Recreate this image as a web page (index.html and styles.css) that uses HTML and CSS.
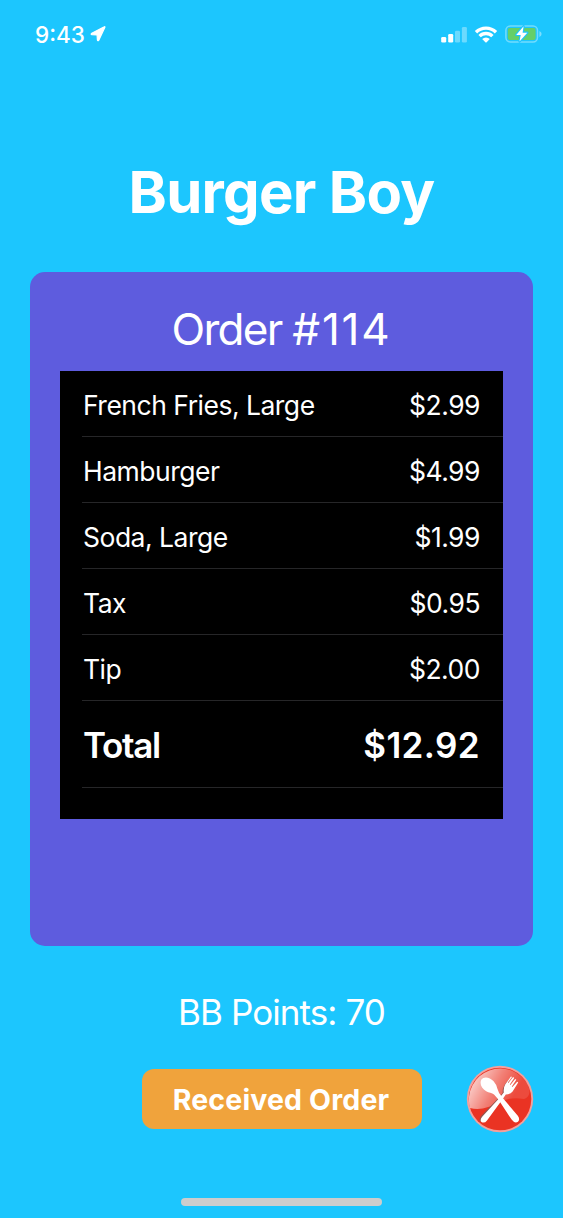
FILE: index.html
```
<!DOCTYPE html>
<html lang="en">
<head>
    <meta charset="UTF-8">
    <meta name="viewport" content="width=device-width, initial-scale=1.0">
    <title>Burger Boy</title>
    <link rel="stylesheet" href="styles.css">
</head>
<body>
    <div class="screen">
        <header class="status-bar">
            <div class="status-left">
                <span class="clock">9:43</span>
                <svg class="location" width="16" height="16" viewBox="0 0 16 16">
                    <path d="M14.8 1.4 L8.9 14 Q7.7 15.4 7.4 13.8 L7.1 9 L2 8.7 Q0.4 8.4 1.8 7.3 L13.8 1.1 Q15.4 0.2 14.8 1.4 Z" fill="#fff" stroke="#fff" stroke-width="1.2" stroke-linejoin="round"/>
                </svg>
            </div>
            <div class="status-right">
                <svg class="signal" width="26" height="17" viewBox="0 0 26 17" fill="#fff">
                    <rect x="0.2" y="11" width="5" height="5.6" rx="1.3"/>
                    <rect x="7.2" y="8" width="5" height="8.6" rx="1.3"/>
                    <rect x="14" y="4.7" width="5" height="11.9" rx="1.3" opacity="0.35"/>
                    <rect x="20.9" y="1" width="5" height="15.6" rx="1.3" opacity="0.35"/>
                </svg>
                <svg class="wifi" width="24" height="17" viewBox="0 0 24 17" fill="none" stroke="#fff">
                    <path d="M2 6.2 A14.2 14.2 0 0 1 22 6.2" stroke-width="3.4"/>
                    <path d="M5.6 10.2 A8.9 8.9 0 0 1 18.4 10.2" stroke-width="3.3"/>
                    <path d="M8.2 13 A5.5 5.5 0 0 1 15.8 13 L12.4 16.4 Q12 16.7 11.6 16.4 Z" fill="#fff" stroke="none"/>
                </svg>
                <svg class="battery" width="38" height="18" viewBox="0 0 38 18">
                    <rect x="0.9" y="0.9" width="31.6" height="16" rx="4.4" fill="none" stroke="#fff" stroke-opacity="0.38" stroke-width="1.5"/>
                    <path d="M34.4 6 Q36.6 6.8 36.6 9 Q36.6 11.2 34.4 12 Z" fill="#fff" opacity="0.42"/>
                    <rect x="2.8" y="2.9" width="27.8" height="12.1" rx="2" fill="#65cf68"/>
                    <path d="M18.6 1.2 L11.2 9.9 H15.7 L14.5 16.6 L22.3 7.7 H17.6 Z" fill="#fff" stroke="#1cc4fe" stroke-width="2.2" paint-order="stroke" stroke-linejoin="round"/>
                </svg>
            </div>
        </header>

        <h1 class="title">Burger Boy</h1>

        <section class="order-card">
            <h2 class="order-number">Order <span class="number">#114</span></h2>
            <div class="receipt">
                <div class="item"><span class="name">French Fries, Large</span><span class="price">$2.99</span></div>
                <div class="item"><span class="name">Hamburger</span><span class="price">$4.99</span></div>
                <div class="item"><span class="name">Soda, Large</span><span class="price">$1.99</span></div>
                <div class="item"><span class="name">Tax</span><span class="price">$0.95</span></div>
                <div class="item"><span class="name">Tip</span><span class="price">$2.00</span></div>
                <div class="item total"><span class="name">Total</span><span class="price">$12.92</span></div>
            </div>
        </section>

        <p class="points">BB Points: 70</p>

        <div class="actions">
            <button class="received">Received Order</button>
            <svg class="menu-icon" width="68" height="68" viewBox="0 0 68 68">
                <defs>
                    <linearGradient id="gloss" gradientUnits="userSpaceOnUse" x1="10" y1="14" x2="46" y2="34">
                        <stop offset="0" stop-color="#fff" stop-opacity="0.72"/>
                        <stop offset="0.5" stop-color="#fff" stop-opacity="0.38"/>
                        <stop offset="1" stop-color="#fff" stop-opacity="0.12"/>
                    </linearGradient>
                </defs>
                <circle cx="34" cy="34" r="33.2" fill="#f3a09d"/>
                <circle cx="34" cy="34" r="31.3" fill="#ea3323"/>
                <path d="M4 43 A31.3 31.3 0 0 1 62.5 21.4 C64.5 26.5 63.5 32 58 34 C48 32 39 34 32 37.5 C24 42.5 14 45.5 4 43 Z" fill="url(#gloss)"/>
                <!-- fork -->
                <path d="M44 13 L38.5 20 Q36.5 23 36.6 28 L32.5 33 L14.6 51.5 Q12.6 55 14.8 56.6 Q17.6 57.6 20 54.5 L36 34 Z" fill="#8f5550"/>
                <path d="M45 11.4 L39.2 19.4 Q37.2 22.6 37.8 27.6 L33.4 33 L16.2 51.8 Q13.6 55.2 15.4 57 Q18.4 58.8 21 55.4 L36 35 L39.8 29.4 Q44.4 29.4 46.6 26.4 L52.2 17.6 L51.2 16.8 L46.4 22.1 L45.8 21.6 L50.3 14.8 L49.2 13.9 L44.4 20.1 L43.8 19.6 L48.2 12.9 L47.1 12 L42.4 18.1 L41.8 17.6 L46 12 Z" fill="#fff"/>
                <!-- spoon -->
                <path d="M32.4 34.6 L45.6 54.6 Q48.8 59 52 56.8 Q54.4 54.6 51.8 50.8 L36.6 32.8 Q32.4 28.4 31.4 23.8 Q30.8 19.8 27.6 16.2 C23.6 11.8 17.6 11.2 15.4 14.6 C13.2 18.4 15.6 23.6 20.2 26.2 C22.9 27.7 26 27.6 28 29.4 Z" fill="#fff"/>
            </svg>
        </div>

        <div class="home-indicator"></div>
    </div>
</body>
</html>
```
FILE: styles.css
```
* {
    box-sizing: border-box;
}

body {
    margin: 0;
    background: #1cc6fe;
    font-family: Inter, "Liberation Sans", sans-serif;
    color: #fff;
}

.screen {
    display: flex;
    flex-direction: column;
    align-items: center;
    width: 563px;
    height: 1218px;
    padding: 0 30px 12px;
    overflow: hidden;
}

/* Status bar */
.status-bar {
    display: flex;
    justify-content: space-between;
    align-items: center;
    align-self: stretch;
    height: 68px;
    margin-right: -10px;
    padding-left: 5px;
}

.status-left,
.status-right {
    display: flex;
    align-items: center;
}

.status-left {
    gap: 5px;
}

.status-right {
    gap: 7px;
}

.clock {
    padding-top: 1px;
    font-size: 22.5px;
    font-weight: 500;
    line-height: 32px;
}

.title {
    margin: 84px 0 0;
    font-size: 58px;
    font-weight: 700;
    line-height: 80px;
    letter-spacing: -0.7px;
    white-space: nowrap;
}

/* Order card */
.order-card {
    align-self: stretch;
    height: 674px;
    margin-top: 40px;
    padding: 30px;
    background: #5e5cde;
    border-radius: 15px;
}

.order-number {
    margin: 0;
    font-size: 44px;
    font-weight: 400;
    line-height: 54px;
    letter-spacing: -1.7px;
    text-align: center;
}

.number {
    letter-spacing: 1.8px;
}

.receipt {
    height: 448px;
    margin-top: 15px;
    padding-left: 22px;
    background: #000;
}

.item {
    display: flex;
    justify-content: space-between;
    align-items: center;
    height: 66px;
    padding: 2px 23px 0 1px;
    border-bottom: 1px solid #262628;
    font-size: 26.5px;
    letter-spacing: -0.5px;
}

.total {
    height: 87px;
    font-size: 35px;
    font-weight: 600;
}

.total .name {
    letter-spacing: -1.3px;
}

.total .price {
    letter-spacing: 0.4px;
}

.points {
    margin: 43px 0 0;
    font-size: 35px;
    font-weight: 400;
    line-height: 46px;
    letter-spacing: -0.9px;
}

.actions {
    display: flex;
    justify-content: flex-end;
    align-items: center;
    gap: 44px;
    align-self: stretch;
    height: 68px;
    margin-top: 30px;
    margin-right: -1px;
}

.received {
    width: 280px;
    height: 60px;
    padding: 0 2px 0 0;
    border: none;
    border-radius: 12px;
    background: #f0a33c;
    color: #fff;
    font-family: inherit;
    font-size: 28.5px;
    font-weight: 700;
    letter-spacing: 0.15px;
}

.home-indicator {
    width: 201px;
    height: 8px;
    margin-top: auto;
    border-radius: 4px;
    background: #cdcdcd;
}
```
